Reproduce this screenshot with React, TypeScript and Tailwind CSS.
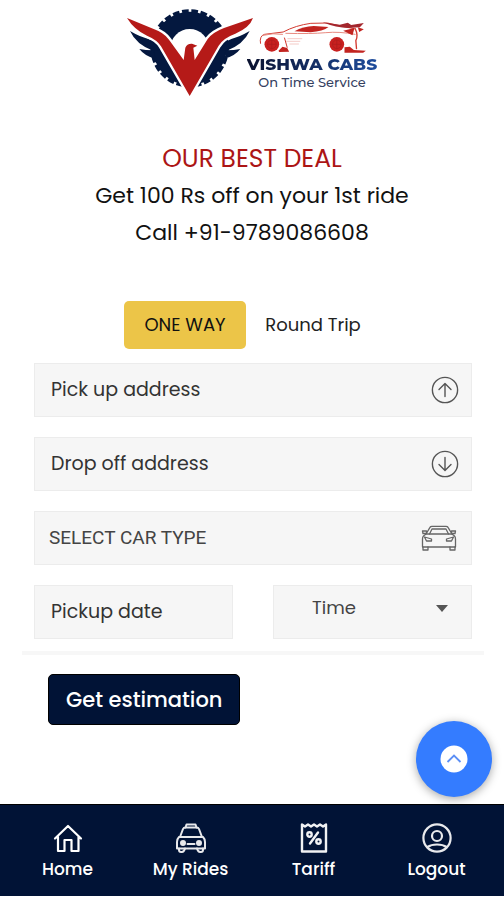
import { useState } from 'react';
import type { ReactNode } from 'react';

type TripType = 'oneway' | 'round';

const CAR_TYPES = ['Mini', 'Sedan', 'SUV'];
const TIMES = ['06:00', '09:00', '12:00', '15:00', '18:00', '21:00'];

function Emblem() {
  return (
    <svg viewBox="20 24 378 267" className="w-[126px] h-[89px] shrink-0" aria-hidden="true">
      <circle cx="208" cy="145" r="110" fill="#04183f" />
      <circle cx="208" cy="145" r="112" fill="none" stroke="#04183f" strokeWidth="11" strokeDasharray="20 8" />
      <circle cx="208" cy="145" r="58" fill="#fff" />
      <path d="M150 145 L266 145 L208 250Z" fill="#fff" />
      {['', 'translate(417 0) scale(-1 1)'].map((t) => (
        <g key={t} transform={t} fill="#04183f">
          <path d="M29 93Q58 110 84 117Q108 125 118 150L98 152Q48 134 29 93Z" />
          <path d="M57 147Q75 151 100 151L104 176Q73 168 57 147Z" />
        </g>
      ))}
      <path
        d="M20 54L100 87Q131 98 146 119L190 180L195 143Q200 130 215 131L231 137L219 143L223 180L262 117Q277 97 311 84L398 54Q388 83 345 101Q309 114 295 137L208 288L122 139Q111 120 80 107Q42 90 20 54Z"
        fill="#b51a18"
        stroke="#fff"
        strokeWidth="14"
        paintOrder="stroke"
      />
    </svg>
  );
}

function SportsCar() {
  return (
    <svg viewBox="50 58 320 99" className="w-[107px] h-[33px]" aria-hidden="true">
      <g fill="none" stroke="#d3392f" strokeLinecap="round">
        <path d="M54 128Q50 106 66 101L122 94Q160 74 205 68L255 67Q300 78 335 84" strokeWidth="3" />
        <path d="M62 104Q92 96 120 101" strokeWidth="3" stroke="#e88a80" />
        <path d="M130 98Q205 100 250 96Q290 92 338 101" strokeWidth="3" stroke="#e88a80" />
        <path d="M136 114H178M132 122H172M142 130H168" strokeWidth="2" stroke="#efb1aa" />
        <path d="M338 84Q348 104 340 120L342 144" strokeWidth="4" />
        <path d="M126 112L134 140" strokeWidth="3" />
      </g>
      <path d="M156 92Q182 77 214 76L258 79Q242 92 204 95Z" fill="#c22420" />
      <path d="M240 65L292 72L316 66L326 73L364 67L352 80L318 82Q282 82 240 65Z" fill="#a3262d" />
      <path d="M346 80L364 86L350 94Z" fill="#c22420" />
      <path d="M302 90L336 82L330 104Z" fill="#c22420" />
      <path d="M108 150L120 138L134 142L140 153L110 154ZM306 140L322 138L334 148L370 150L362 156H306Z" fill="#c22420" />
      <circle cx="88" cy="131" r="22" fill="#c8201f" />
      <circle cx="283" cy="131" r="22" fill="#c8201f" />
      <g fill="none" stroke="#ab1c1c" strokeWidth="2">
        <circle cx="88" cy="131" r="13" />
        <circle cx="283" cy="131" r="13" />
        <path d="M88 118V144M75 131H101M283 118V144M270 131H296" />
      </g>
    </svg>
  );
}

function ArrowCircle({ down = false }: { down?: boolean }) {
  return (
    <svg viewBox="0 0 28 28" className={`size-7 ${down ? 'rotate-180' : ''}`} fill="none" stroke="#555" strokeWidth="1.4" strokeLinecap="round" strokeLinejoin="round">
      <circle cx="14" cy="14" r="12.6" />
      <path d="M14 20.5V7.8M8 13.6L14 7.6L20 13.6" />
    </svg>
  );
}

function CarFront() {
  return (
    <svg viewBox="0 0 36 26" className="w-9 h-[26px]" fill="none" stroke="#666" strokeWidth="1.3" strokeLinejoin="round" strokeLinecap="round">
      <path d="M5 9L9 2.4Q9.5 1.4 11 1.4H25Q26.5 1.4 27 2.4L31 9" />
      <path d="M8.5 9L11 4H25L27.5 9" />
      <path d="M5 9H31L33.5 11Q34.5 12 34.5 14V22H1.5V14Q1.5 12 2.5 11Z" />
      <path d="M1.5 6H5.5V8.5H2ZM34.5 6H30.5V8.5H34Z" />
      <path d="M3.5 12L10.5 14V16H5.5ZM32.5 12L25.5 14V16H30.5Z" />
      <path d="M7 22V25H2V22M29 22V25H34V22" />
    </svg>
  );
}

function HomeIcon() {
  return (
    <svg viewBox="0 0 30 30" className="size-[30px]" fill="none" stroke="#fff" strokeWidth="2.2" strokeLinejoin="round" strokeLinecap="round">
      <path d="M2 15.5L15 3L28 15.5M5 13.5V28H11.5V17H18.5V28H25.5V13.5" />
    </svg>
  );
}

function TaxiIcon() {
  return (
    <svg viewBox="0 0 30 30" className="size-[30px]" fill="none" stroke="#e8e9ec" strokeWidth="2" strokeLinejoin="round" strokeLinecap="round">
      <path d="M9.5 4.5L10.5 1.5H19.5L20.5 4.5" />
      <path d="M4 14L7 6Q7.6 4.5 9.5 4.5H20.5Q22.4 4.5 23 6L26 14" />
      <path d="M3 14H27Q29 16 29 19V25.5H1V19Q1 16 3 14Z" />
      <path d="M3 25.5V27Q3 29 5 29H6Q8 29 9 25.5M21 25.5Q22 29 24 29H25Q27 29 27 27V25.5M11.500 21H18.500" />
      <circle cx="7" cy="20" r="2" fill="#e8e9ec" />
      <circle cx="23" cy="20" r="2" fill="#e8e9ec" />
    </svg>
  );
}

function TariffIcon() {
  return (
    <svg viewBox="0 0 30 30" className="size-[30px]" fill="none" stroke="#f1f2f4" strokeWidth="2.4" strokeLinejoin="round" strokeLinecap="round">
      <path d="M3 1.5V28.5H27V1.5L24 3.5L21 1.5L18 3.5L15 1.5L12 3.5L9 1.5L6 3.5Z" />
      <path d="M19 9.5L11 20.5" />
      <circle cx="10.5" cy="11.500" r="2.2" />
      <circle cx="19.5" cy="18.500" r="2.2" />
    </svg>
  );
}

function UserIcon() {
  return (
    <svg viewBox="0 0 30 30" className="size-[30px]" fill="none" stroke="#e8e9ec" strokeWidth="2.2" strokeLinecap="round">
      <circle cx="15" cy="15" r="13.6" />
      <circle cx="15" cy="13" r="5" />
      <path d="M5.5 24Q9 21.5 15 21.5T24.5 24" />
    </svg>
  );
}

const NAV: { label: string; icon: ReactNode }[] = [
  { label: 'Home', icon: <HomeIcon /> },
  { label: 'My Rides', icon: <TaxiIcon /> },
  { label: 'Tariff', icon: <TariffIcon /> },
  { label: 'Logout', icon: <UserIcon /> },
];

const boxClass = 'flex items-center h-[54px] bg-[#f6f6f6] border border-[#ececec]';
const inputClass = 'flex-1 min-w-0 h-full pl-4 pb-0.5 bg-transparent text-[19px] text-[#333] placeholder:text-[#333] outline-none';

export default function App() {
  const [trip, setTrip] = useState<TripType>('oneway');
  const [carType, setCarType] = useState('');
  const [time, setTime] = useState('');

  const tabClass = (t: TripType) =>
    `h-12 rounded-[5px] text-lg ${trip === t ? 'bg-[#ecc548] text-[#111]' : 'text-[#222]'}`;

  return (
    <div className="min-h-screen flex flex-col bg-white pb-1 font-[Poppins,Inter,sans-serif]">
      <main className="relative flex-1 flex flex-col">
        <header className="flex justify-center pt-2">
          <Emblem />
          <div className="-ml-1.5 pt-3 flex flex-col items-center">
            <SportsCar />
            <p className="font-[Montserrat,'Open_Sans',sans-serif] text-[17px] leading-[22px] font-extrabold bg-linear-to-r from-[#0a1230] to-[#1d4c9c] bg-clip-text text-transparent">VISHWA CABS</p>
            <p className="font-[Montserrat,Inter,sans-serif] text-[13px] leading-[14px] font-medium text-[#35415f]">On Time Service</p>
          </div>
        </header>

        <section className="mt-[43px] text-center text-[22px] leading-[37px] text-[#111]">
          <h1 className="text-[25px] leading-[37px] text-[#ac1515]">OUR BEST DEAL</h1>
          <p>Get 100 Rs off on your 1st ride</p>
          <p>Call +91-9789086608</p>
        </section>

        <form className="mt-[50px]" onSubmit={(e) => e.preventDefault()}>
          <div className="flex justify-center">
            <button type="button" onClick={() => setTrip('oneway')} className={`${tabClass('oneway')} w-[122px]`}>ONE WAY</button>
            <button type="button" onClick={() => setTrip('round')} className={`${tabClass('round')} w-[134px]`}>Round Trip</button>
          </div>

          <div className="mt-[14px] pl-[34px] pr-8 space-y-5">
            <label className={boxClass}>
              <input type="text" aria-label="Pick up address" placeholder="Pick up address" className={inputClass} />
              <span className="pr-3"><ArrowCircle /></span>
            </label>
            <label className={boxClass}>
              <input type="text" aria-label="Drop off address" placeholder="Drop off address" className={inputClass} />
              <span className="pr-3"><ArrowCircle down /></span>
            </label>
            <label className={boxClass}>
              <select aria-label="Car type" value={carType} onChange={(e) => setCarType(e.target.value)}
                className="flex-1 min-w-0 h-full pl-3.5 appearance-none bg-transparent font-[Roboto,sans-serif] text-[19px] text-[#444] outline-none">
                <option value="">SELECT CAR TYPE</option>
                {CAR_TYPES.map((c) => <option key={c}>{c}</option>)}
              </select>
              <span className="pr-3.5"><CarFront /></span>
            </label>
            <div className="grid grid-cols-2 gap-10">
              <label className={boxClass}>
                <input type="text" aria-label="Pickup date" placeholder="Pickup date" className={inputClass} />
              </label>
              <label className={`${boxClass} pb-2`}>
                <select aria-label="Time" value={time} onChange={(e) => setTime(e.target.value)}
                  className="flex-1 min-w-0 h-full pl-[38px] appearance-none bg-transparent text-lg text-[#444] outline-none">
                  <option value="">Time</option>
                  {TIMES.map((t) => <option key={t}>{t}</option>)}
                </select>
                <svg viewBox="0 0 12 7" className="w-3 h-[7px] mr-[23px]" fill="#555"><path d="M0 0H12L6 7Z" /></svg>
              </label>
            </div>
          </div>

          <div className="mt-3 ml-[22px] mr-5 h-1 bg-[#f7f7f7]" />
          <button type="submit" className="mt-[19px] ml-12 h-[51px] px-[17px] rounded-[5px] border border-black bg-[#011336] text-[21px] font-medium text-white">
            Get estimation
          </button>
        </form>

        <button type="button" aria-label="Scroll to top" className="absolute right-3 bottom-[7px] size-[76px] rounded-full bg-[#347cff] shadow-[0_2px_10px_rgba(0,0,0,0.35)] flex items-center justify-center">
          <svg viewBox="0 0 28 28" className="size-7">
            <circle cx="14" cy="14" r="13.5" fill="#fff" />
            <path d="M7.5 17L14 10.5L20.5 17" fill="none" stroke="#5c8ff5" strokeWidth="1.8" />
          </svg>
        </button>
      </main>

      <nav className="h-[92px] px-1.5 pt-[18px] grid grid-cols-4 bg-[#011336] border-t border-black text-white">
        {NAV.map((item) => (
          <a key={item.label} href="#" className="flex flex-col items-center gap-0.5 text-[17px] leading-7 font-medium whitespace-nowrap">
            {item.icon}
            {item.label}
          </a>
        ))}
      </nav>
    </div>
  );
}
